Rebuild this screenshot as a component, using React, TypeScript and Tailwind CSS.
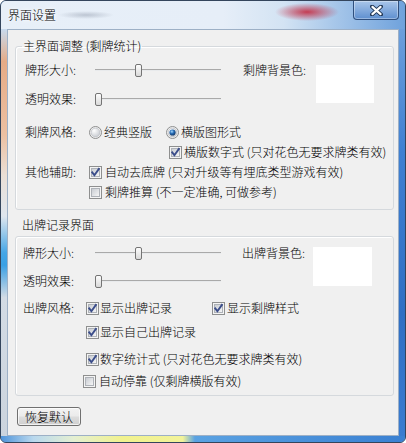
import React from "react";

function CheckBox({ checked }: { checked: boolean }) {
  return (
    <svg width="13" height="13" viewBox="0 0 13 13" className="shrink-0">
      <defs>
        <linearGradient id="cbg" x1="0" y1="0" x2="1" y2="1">
          <stop offset="0" stopColor="#c6cad0" />
          <stop offset="1" stopColor="#f8f8f8" />
        </linearGradient>
      </defs>
      <rect x="0.5" y="0.5" width="12" height="12" fill="#f4f4f4" stroke="#8e8f8f" />
      <rect x="2.5" y="2.5" width="8" height="8" fill="url(#cbg)" stroke="#aeb2b8" />
      {checked && (
        <path d="M3.2 6.4 L5.4 9.2 L9.9 2.9" stroke="#3b4d8a" strokeWidth="1.9" fill="none" strokeLinecap="square" />
      )}
    </svg>
  );
}

function Radio({ checked }: { checked: boolean }) {
  return (
    <svg width="13" height="13" viewBox="0 0 13 13" className="shrink-0">
      <defs>
        <radialGradient id="rbg" cx="0.35" cy="0.3" r="0.8">
          <stop offset="0" stopColor="#ffffff" />
          <stop offset="1" stopColor="#c4c8ce" />
        </radialGradient>
        <radialGradient id="rdot" cx="0.4" cy="0.35" r="0.7">
          <stop offset="0" stopColor="#a8dcff" />
          <stop offset="0.45" stopColor="#2a6fb8" />
          <stop offset="1" stopColor="#0c2f5e" />
        </radialGradient>
      </defs>
      <circle cx="6.5" cy="6.5" r="6" fill="#f0f0f0" stroke="#8e8f8f" />
      <circle cx="6.5" cy="6.5" r="4.4" fill="url(#rbg)" stroke="#b5b9bf" strokeWidth="0.6" />
      {checked && <circle cx="6.5" cy="6.5" r="3.1" fill="url(#rdot)" />}
    </svg>
  );
}

function Slider({ pos }: { pos: number }) {
  return (
    <div className="relative w-[126px] h-[20px] flex items-center">
      <div className="w-full h-[2px] border-t border-[#a9a9a9] bg-[#e8eaec]" />
      <div
        className="absolute top-[4px] w-[7px] h-[13px] rounded-[2px] border border-[#747474] bg-gradient-to-b from-[#fdfdfd] to-[#d9d9d9]"
        style={{ left: pos }}
      />
    </div>
  );
}

function Check({ checked, children, gap = "ml-[2px]" }: { checked: boolean; children: React.ReactNode; gap?: string }) {
  return (
    <div className="flex items-center h-[20px]">
      <CheckBox checked={checked} />
      <span className={gap + " whitespace-nowrap"}>{children}</span>
    </div>
  );
}

export default function App() {
  return (
    <div className="w-[406px] h-[443px] font-['Noto_Sans_CJK_SC','Noto_Sans',sans-serif] font-light text-[12px] leading-[14px] text-black">
      <div className="w-[406px] h-[443px] border border-[#34455c] rounded-[6px] overflow-hidden flex flex-col bg-[#6a9fdc]">
        {/* title bar */}
        <div className="h-[28px] shrink-0 flex items-start justify-between bg-[radial-gradient(ellipse_32px_9px_at_306px_11px,rgba(196,44,66,0.9),rgba(196,44,66,0)),radial-gradient(ellipse_28px_4px_at_85px_14px,rgba(110,120,140,0.35),rgba(110,120,140,0)),linear-gradient(to_right,#e7eff8_0%,#e6eef8_55%,#d3e3f3_70%,#a9c8ea_82%,#6fa2dc_100%)]">
          <span className="ml-[7px] mt-[7px] [text-shadow:0_0_6px_#ffffff,0_0_3px_#ffffff]">界面设置</span>
          <div className="mr-[6px] w-[46px] h-[19px] rounded-b-[4px] border border-t-0 border-[#2f4f7d] bg-gradient-to-b from-[#a9c6ea] to-[#5e8fcf] shadow-[inset_0_0_0_1px_rgba(255,255,255,0.35)] flex items-center justify-center">
            <svg width="13" height="11" viewBox="0 0 13 11">
              <path d="M2 1.5 L11 9.5 M11 1.5 L2 9.5" stroke="#1f3452" strokeWidth="4" strokeLinecap="round" />
              <path d="M2.4 1.9 L10.6 9.1 M10.6 1.9 L2.4 9.1" stroke="#ffffff" strokeWidth="2.2" strokeLinecap="round" />
            </svg>
          </div>
        </div>
        {/* middle */}
        <div className="flex flex-1 min-h-0">
          <div className="w-[6px] shrink-0 bg-[linear-gradient(to_bottom,#c9dbee_0%,#e6ab86_8%,#ecc0a2_26%,#eadfd6_36%,#dfe6ee_46%,#45a6e6_55%,#3aa0e4_58%,#d3dbe4_66%,#cbd4de_100%)]" />
          <div className="w-[392px] shrink-0 border border-[#9db0c6] bg-[#f0f0f0] flex flex-col">
            {/* Group 1 */}
            <fieldset className="ml-[7px] mt-[9px] w-[379px] border border-[#d5d9dd] rounded-[3px] px-0 pb-[7px] shadow-[inset_1px_1px_0_#ffffff]">
              <legend className="ml-[6px] px-[1px]">主界面调整 (剩牌统计)</legend>
              <div className="pl-[9px] pt-[7px] flex flex-col">
                <div className="flex">
                  <div className="flex flex-col">
                    <div className="flex items-center h-[20px]">
                      <span className="w-[70px]">牌形大小:</span>
                      <Slider pos={40} />
                    </div>
                    <div className="flex items-center h-[20px] mt-[9px]">
                      <span className="w-[70px]">透明效果:</span>
                      <Slider pos={0} />
                    </div>
                  </div>
                  <div className="ml-[22px] flex items-start">
                    <span className="w-[73px] h-[20px] flex items-center">剩牌背景色:</span>
                    <div className="mt-[5px] w-[58px] h-[38px] bg-white" />
                  </div>
                </div>
                <div className="flex items-center h-[20px] mt-[13px]">
                  <span className="w-[64px]">剩牌风格:</span>
                  <Radio checked={false} />
                  <span className="ml-[2px]">经典竖版</span>
                  <div className="ml-[14px]">
                    <Radio checked={true} />
                  </div>
                  <span className="ml-[2px]">横版图形式</span>
                </div>
                <div className="ml-[144px]">
                  <Check checked={true}>横版数字式 (只对花色无要求牌类有效)</Check>
                </div>
                <div className="flex items-center h-[20px]">
                  <span className="w-[64px]">其他辅助:</span>
                  <Check checked={true} gap="ml-[3px]">自动去底牌 (只对升级等有埋底类型游戏有效)</Check>
                </div>
                <div className="ml-[64px]">
                  <Check checked={false} gap="ml-[3px]">剩牌推算 (不一定准确, 可做参考)</Check>
                </div>
              </div>
            </fieldset>
            {/* Group 2 */}
            <span className="ml-[14px] mt-[8px] h-[14px]">出牌记录界面</span>
            <div className="ml-[7px] mt-[4px] w-[379px] border border-[#d5d9dd] rounded-[3px] pb-[4px] shadow-[inset_1px_1px_0_#ffffff]">
              <div className="pl-[7px] pt-[6px] flex flex-col">
                <div className="flex">
                  <div className="flex flex-col">
                    <div className="flex items-center h-[20px]">
                      <span className="w-[72px]">牌形大小:</span>
                      <Slider pos={40} />
                    </div>
                    <div className="flex items-center h-[20px] mt-[8px]">
                      <span className="w-[72px]">透明效果:</span>
                      <Slider pos={0} />
                    </div>
                  </div>
                  <div className="ml-[21px] flex items-start">
                    <span className="w-[71px] h-[20px] flex items-center">出牌背景色:</span>
                    <div className="mt-[4px] w-[59px] h-[39px] bg-white" />
                  </div>
                </div>
                <div className="flex items-center h-[20px] mt-[7px]">
                  <span className="w-[63px]">出牌风格:</span>
                  <div className="w-[126px]">
                    <Check checked={true} gap="ml-[1px]">显示出牌记录</Check>
                  </div>
                  <Check checked={true}>显示剩牌样式</Check>
                </div>
                <div className="ml-[63px] mt-[4px]">
                  <Check checked={true} gap="ml-[1px]">显示自己出牌记录</Check>
                </div>
                <div className="ml-[63px] mt-[7px]">
                  <Check checked={true} gap="ml-[1px]">数字统计式 (只对花色无要求牌类有效)</Check>
                </div>
                <div className="ml-[60px] mt-[2px]">
                  <Check checked={false} gap="ml-[3px]">自动停靠 (仅剩牌横版有效)</Check>
                </div>
              </div>
            </div>
            <button className="ml-[9px] mt-[11px] w-[64px] h-[19px] rounded-[3px] border border-[#707070] bg-[linear-gradient(to_bottom,#f3f3f3_0%,#ebebeb_48%,#dddddd_52%,#cfcfcf_100%)] shadow-[inset_0_0_0_1px_rgba(255,255,255,0.7)] flex items-center justify-center text-[12px] leading-[14px]">
              恢复默认
            </button>
          </div>
          <div className="w-[6px] shrink-0 bg-[linear-gradient(to_bottom,#6d9fdc_0%,#3f80d2_30%,#2f6fc4_70%,#3a7cd0_100%)]" />
        </div>
        {/* bottom frame */}
        <div className="h-[6px] shrink-0 bg-[linear-gradient(to_right,#4f94da_0%,#b9d8ee_8%,#e4efd2_18%,#f1f28e_30%,#f2f39a_45%,#5aa2e2_48%,#3a80d2_100%)]" />
      </div>
    </div>
  );
}
